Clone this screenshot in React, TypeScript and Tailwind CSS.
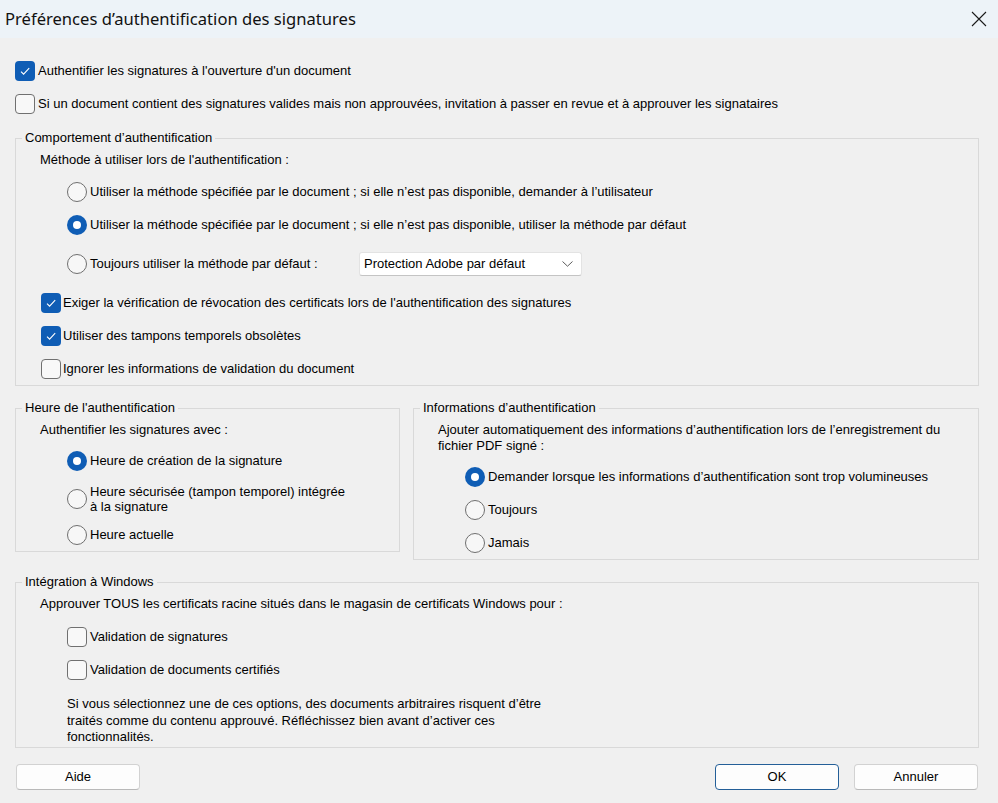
import React from "react";

const Check = ({ checked }: { checked?: boolean }) =>
  checked ? (
    <div className="w-[20px] h-[20px] rounded-[4px] bg-[#0f5db5] flex items-center justify-center shrink-0">
      <svg width="20" height="20" viewBox="0 0 20 20">
        <path d="M6 10.6l2.6 2.6 5.6-6" fill="none" stroke="white" strokeWidth="1.1" />
      </svg>
    </div>
  ) : (
    <div className="w-[20px] h-[20px] rounded-[4px] border border-[#707070] bg-[#f8f8f8] shrink-0" />
  );

const Radio = ({ on }: { on?: boolean }) =>
  on ? (
    <div className="w-[20px] h-[20px] rounded-full bg-[#0f5db5] flex items-center justify-center shrink-0">
      <div className="w-[8px] h-[8px] rounded-full bg-white" />
    </div>
  ) : (
    <div className="w-[20px] h-[20px] rounded-full border border-[#6f6f6f] bg-[#f7f7f7] shrink-0" />
  );

const Legend = ({ children }: { children: React.ReactNode }) => (
  <legend className="ml-[-18px] px-[3px] leading-4">{children}</legend>
);

const Btn = ({ children, primary }: { children: React.ReactNode; primary?: boolean }) => (
  <div
    className={
      primary
        ? "w-[124px] h-[26px] rounded-[4px] border border-[#245f98] bg-[#fdfdfd] flex items-center justify-center"
        : "w-[124px] h-[26px] rounded-[4px] border border-[#d2d2d2] border-b-[#b9b9b9] bg-[#fdfdfd] flex items-center justify-center"
    }
  >
    {children}
  </div>
);

export default function App() {
  return (
    <div className="w-[998px] h-[803px] bg-[#f0f0f0] text-[13px] leading-4 text-black font-['Liberation_Sans',Arial,sans-serif] overflow-hidden">
      <div className="h-[38px] bg-[#edf3f8] flex items-center justify-between pl-[5px] pr-[11px]">
        <div className="font-['Noto_Sans',sans-serif] text-[16.6px] text-[#111]">Préférences d’authentification des signatures</div>
        <svg width="16" height="16" viewBox="0 0 16 16">
          <path d="M1 1L15 15M15 1L1 15" stroke="#1a1a1a" strokeWidth="1.1" />
        </svg>
      </div>

      <div className="pl-[15px] pr-[19px]">
        <div className="mt-[23px] h-[20px] flex items-center gap-[3px]">
          <Check checked />
          <span>Authentifier les signatures à l'ouverture d'un document</span>
        </div>
        <div className="mt-[13px] h-[20px] flex items-center gap-[3px]">
          <Check />
          <span>Si un document contient des signatures valides mais non approuvées, invitation à passer en revue et à approuver les signataires</span>
        </div>

        <fieldset className="mt-[16px] border border-[#d9d9d9] pl-[24px] pb-[6px]">
          <Legend>Comportement d’authentification</Legend>
          <div className="mt-[6px] h-4">Méthode à utiliser lors de l'authentification :</div>
          <div className="mt-[14px] ml-[27px] h-[20px] flex items-center gap-[3px]">
            <Radio />
            <span>Utiliser la méthode spécifiée par le document ; si elle n’est pas disponible, demander à l’utilisateur</span>
          </div>
          <div className="mt-[13px] ml-[27px] h-[20px] flex items-center gap-[3px]">
            <Radio on />
            <span>Utiliser la méthode spécifiée par le document ; si elle n’est pas disponible, utiliser la méthode par défaut</span>
          </div>
          <div className="mt-[17px] ml-[27px] h-[24px] flex items-center gap-[3px]">
            <Radio />
            <span className="w-[266px]">Toujours utiliser la méthode par défaut :</span>
            <div className="w-[223px] h-[24px] bg-white border border-[#e3e3e3] border-b-[#c4c4c4] rounded-[3px] flex items-center justify-between pl-[4px] pr-[8px]">
              <span>Protection Adobe par défaut</span>
              <svg width="11" height="6" viewBox="0 0 11 6">
                <path d="M0.5 0.5L5.5 5.2L10.5 0.5" fill="none" stroke="#5c5c5c" strokeWidth="1" />
              </svg>
            </div>
          </div>
          <div className="mt-[17px] ml-[1px] h-[20px] flex items-center gap-[2px]">
            <Check checked />
            <span>Exiger la vérification de révocation des certificats lors de l'authentification des signatures</span>
          </div>
          <div className="mt-[13px] ml-[1px] h-[20px] flex items-center gap-[2px]">
            <Check checked />
            <span>Utiliser des tampons temporels obsolètes</span>
          </div>
          <div className="mt-[13px] ml-[1px] h-[20px] flex items-center gap-[2px]">
            <Check />
            <span>Ignorer les informations de validation du document</span>
          </div>
        </fieldset>

        <div className="mt-[14px] flex items-start gap-[13px]">
          <fieldset className="w-[385px] border border-[#d9d9d9] pl-[24px] pb-[6px]">
            <Legend>Heure de l'authentification</Legend>
            <div className="mt-[6px] h-4">Authentifier les signatures avec :</div>
            <div className="mt-[13px] ml-[27px] h-[20px] flex items-center gap-[3px]">
              <Radio on />
              <span>Heure de création de la signature</span>
            </div>
            <div className="mt-[13px] ml-[27px] h-[30px] flex items-center gap-[3px]">
              <Radio />
              <span className="leading-[15px]">
                Heure sécurisée (tampon temporel) intégrée
                <br />à la signature
              </span>
            </div>
            <div className="mt-[11px] ml-[27px] h-[20px] flex items-center gap-[3px]">
              <Radio />
              <span>Heure actuelle</span>
            </div>
          </fieldset>

          <fieldset className="w-[566px] border border-[#d9d9d9] pl-[24px] pb-[6px]">
            <Legend>Informations d’authentification</Legend>
            <div className="mt-[6px]">
              Ajouter automatiquement des informations d’authentification lors de l’enregistrement du
              <br />
              fichier PDF signé :
            </div>
            <div className="mt-[13px] ml-[27px] h-[20px] flex items-center gap-[3px]">
              <Radio on />
              <span>Demander lorsque les informations d’authentification sont trop volumineuses</span>
            </div>
            <div className="mt-[13px] ml-[27px] h-[20px] flex items-center gap-[3px]">
              <Radio />
              <span>Toujours</span>
            </div>
            <div className="mt-[13px] ml-[27px] h-[20px] flex items-center gap-[3px]">
              <Radio />
              <span>Jamais</span>
            </div>
          </fieldset>
        </div>

        <fieldset className="mt-[14px] border border-[#d9d9d9] pl-[24px] pb-[1px]">
          <Legend>Intégration à Windows</Legend>
          <div className="mt-[6px] h-4">Approuver TOUS les certificats racine situés dans le magasin de certificats Windows pour :</div>
          <div className="mt-[15px] ml-[27px] h-[20px] flex items-center gap-[3px]">
            <Check />
            <span>Validation de signatures</span>
          </div>
          <div className="mt-[13px] ml-[27px] h-[20px] flex items-center gap-[3px]">
            <Check />
            <span>Validation de documents certifiés</span>
          </div>
          <div className="mt-[16px] ml-[27px] leading-[16.5px]">
            Si vous sélectionnez une de ces options, des documents arbitraires risquent d’être
            <br />
            traités comme du contenu approuvé. Réfléchissez bien avant d’activer ces
            <br />
            fonctionnalités.
          </div>
        </fieldset>

        <div className="mt-[16px] flex items-center">
          <div className="ml-[1px]">
            <Btn>Aide</Btn>
          </div>
          <div className="ml-auto flex items-center gap-[15px] mr-[1px]">
            <Btn primary>OK</Btn>
            <Btn>Annuler</Btn>
          </div>
        </div>
      </div>
    </div>
  );
}
